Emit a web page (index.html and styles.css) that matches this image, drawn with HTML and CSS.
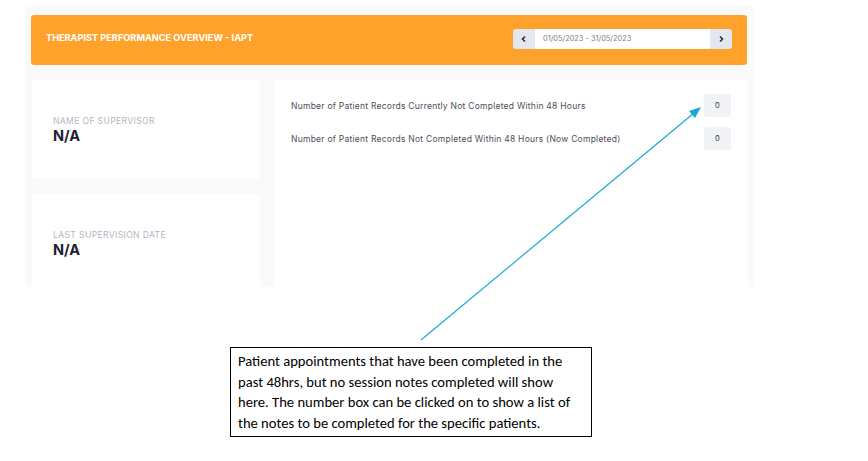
FILE: index.html
```html
<!DOCTYPE html>
<html>
<head>
<meta charset="utf-8">
<link rel="stylesheet" href="styles.css">
</head>
<body>
<div class="stage">
  <div class="panel">
    <div class="header">
      <div class="title">THERAPIST PERFORMANCE OVERVIEW - IAPT</div>
      <div class="datepicker">
        <span class="dp-btn"><svg width="8" height="8" viewBox="0 0 8 8"><polyline points="5,1.5 2.5,4 5,6.5" fill="none" stroke="#2b2f3a" stroke-width="1.6"/></svg></span>
        <span class="dp-text">01/05/2023 - 31/05/2023</span>
        <span class="dp-btn"><svg width="8" height="8" viewBox="0 0 8 8"><polyline points="3,1.5 5.5,4 3,6.5" fill="none" stroke="#2b2f3a" stroke-width="1.6"/></svg></span>
      </div>
    </div>
    <div class="content">
      <div class="left">
        <div class="card info">
          <div class="label">NAME OF SUPERVISOR</div>
          <div class="value">N/A</div>
        </div>
        <div class="card info">
          <div class="label">LAST SUPERVISION DATE</div>
          <div class="value">N/A</div>
        </div>
      </div>
      <div class="card stats">
        <div class="row"><span>Number of Patient Records Currently Not Completed Within 48 Hours</span><span class="num">0</span></div>
        <div class="row"><span>Number of Patient Records Not Completed Within 48 Hours (Now Completed)</span><span class="num">0</span></div>
      </div>
    </div>
  </div>
  <div class="note">Patient appointments that have been completed in the past 48hrs, but no session notes completed will show here. The number box can be clicked on to show a list of the notes to be completed for the specific patients.</div>
  <svg class="arrow" width="868" height="461" viewBox="0 0 868 461">
    <line x1="421" y1="340" x2="694" y2="113" stroke="#1aa7d4" stroke-width="1.2"/>
    <polygon points="701,107 689,111 695,118" fill="#1aa7d4"/>
  </svg>
</div>
</body>
</html>
```
FILE: styles.css
```css
html, body {
  margin: 0;
  padding: 0;
  background: #ffffff;
}
.stage {
  position: relative;
  width: 868px;
  height: 461px;
  padding-top: 5px;
  box-sizing: border-box;
}
.panel {
  margin-left: 25px;
  width: 728px;
  height: 282px;
  background: #fafafa;
  padding: 10px 6px 0 6px;
  box-sizing: border-box;
  overflow: hidden;
  font-family: "Inter", "Open Sans", sans-serif;
}
.header {
  height: 50px;
  background: #ffa22c;
  border-radius: 3px;
  display: flex;
  align-items: center;
  justify-content: space-between;
  padding: 0 15px 0 15px;
  box-sizing: border-box;
}
.title {
  color: #ffffff;
  font-weight: 700;
  font-size: 9.2px;
  margin-top: -5px;
}
.datepicker {
  display: flex;
  height: 20px;
  width: 219px;
  border-radius: 3px;
  overflow: hidden;
  margin-top: -3px;
}
.dp-btn {
  width: 22px;
  background: #e4e7ef;
  display: flex;
  align-items: center;
  justify-content: center;
}
.dp-text {
  flex: 1;
  background: #ffffff;
  color: #7b7f8c;
  font-size: 7.4px;
  display: flex;
  align-items: center;
  padding-left: 8px;
}
.content {
  display: grid;
  grid-template-columns: 228px 473px;
  column-gap: 15px;
  margin-top: 15px;
  margin-left: 1px;
}
.left {
  display: flex;
  flex-direction: column;
  gap: 15px;
}
.card {
  background: #ffffff;
  border-radius: 3px;
}
.info {
  height: 99px;
  display: flex;
  flex-direction: column;
  justify-content: center;
  padding-left: 21px;
  box-sizing: border-box;
}
.label {
  color: #b3b6c2;
  font-size: 8.6px;
  letter-spacing: 0.35px;
  line-height: 12px;
}
.value {
  color: #1e2130;
  font-weight: 700;
  font-size: 14.5px;
  line-height: 17px;
}
.stats {
  height: 260px;
  padding: 14px 17px 0 16px;
  box-sizing: border-box;
  display: flex;
  flex-direction: column;
  gap: 10px;
}
.row {
  display: flex;
  justify-content: space-between;
  align-items: center;
  font-size: 8.5px;
  letter-spacing: 0.25px;
  color: #4a4d59;
}
.num {
  width: 27px;
  height: 23px;
  background: #f1f3f7;
  border-radius: 3px;
  display: flex;
  align-items: center;
  justify-content: center;
  font-size: 7.6px;
  letter-spacing: 0;
  color: #3a3d48;
}
.note {
  margin: 60px 0 0 230px;
  width: 362px;
  height: 90px;
  border: 1px solid #000000;
  box-sizing: border-box;
  padding: 3px 6px 0 7px;
  font-family: "Carlito", "Liberation Sans", sans-serif;
  font-size: 14.6px;
  line-height: 20.6px;
  color: #000000;
}
.arrow {
  position: absolute;
  left: 0;
  top: 0;
  pointer-events: none;
}
```
